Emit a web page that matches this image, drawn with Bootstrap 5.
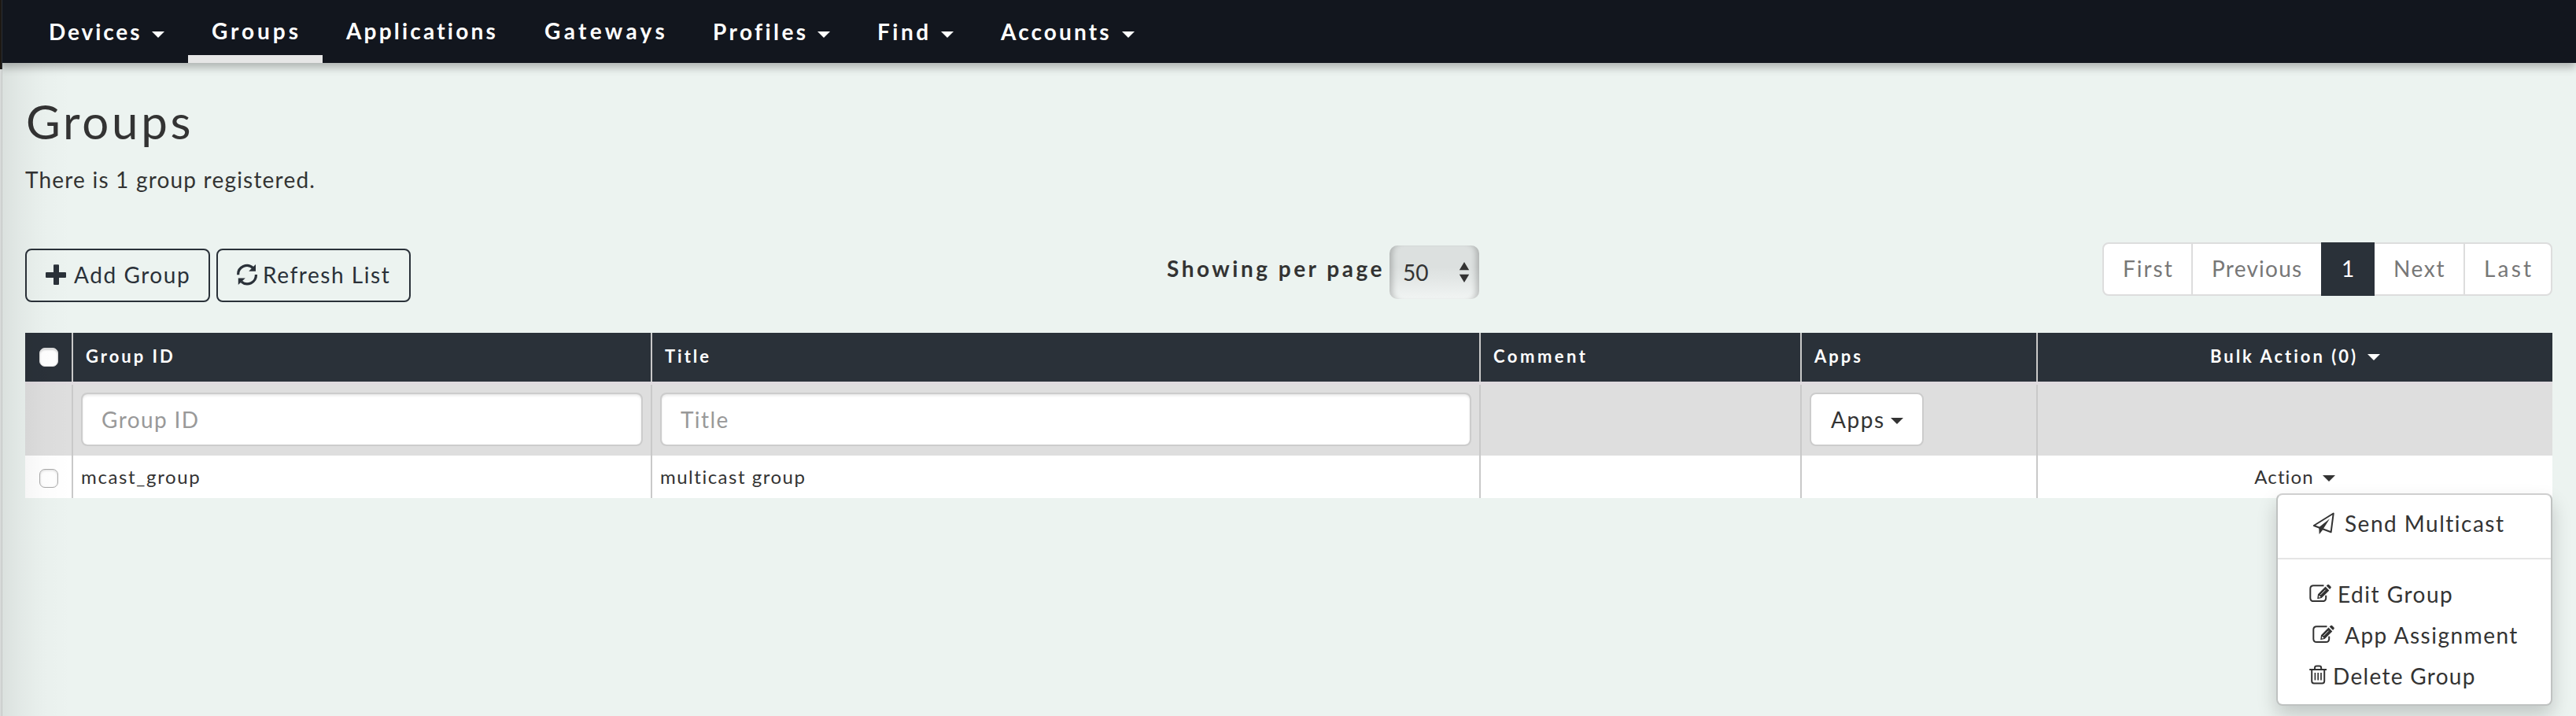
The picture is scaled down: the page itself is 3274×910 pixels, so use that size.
<!DOCTYPE html>
<html lang="en">
<head>
<meta charset="utf-8">
<meta name="viewport" content="width=device-width, initial-scale=1">
<title>Groups</title>
<link href="https://cdn.jsdelivr.net/npm/bootstrap@5.3.0/dist/css/bootstrap.min.css" rel="stylesheet">
<style>
  :root { --ink: #333; --dark: #2a3139; --line: #c9c9c9; }
  html, body { height: 910px; overflow: hidden; }
  body { font-family: Lato, sans-serif; font-size: 28px; line-height: 40px; color: var(--ink); background: #ecf3f0; letter-spacing: 1.5px; white-space: nowrap; }

  /* window edge and its soft shadow */
  .edge { position: absolute; left: 0; top: 0; bottom: 0; width: 3px; z-index: 20; background: linear-gradient(90deg, #d6d9d8 2px, #c3c6c5 2px); }
  .edge::before { content: ""; display: block; height: 88px; width: 3px; background: linear-gradient(90deg, #1d1813 2px, #2b3036 2px); }
  .edge-shade { position: absolute; left: 3px; top: 80px; bottom: 0; width: 88px; z-index: 5; pointer-events: none; background: linear-gradient(90deg, rgba(0,0,0,.075), rgba(0,0,0,.045) 25%, rgba(0,0,0,.012) 60%, transparent); }

  .topbar { height: 80px; padding: 0 0 0 32px; background: #12161e; box-shadow: 0 6px 10px rgba(0,0,0,.26); position: relative; z-index: 6; }
  .topbar .nav-link { height: 80px; padding: 0 30px; line-height: 78px; font-weight: 700; color: #fff; border-radius: 0; }
  .topbar .active { box-shadow: inset 0 -10px #e6e6e6; }
  .n1 { width: 207px; letter-spacing: 2.9px; } .n2 { width: 171px; letter-spacing: 3.95px; }
  .n3 { width: 252px; letter-spacing: 3.2px; } .n4 { width: 214px; letter-spacing: 4.35px; }
  .n5 { width: 209px; letter-spacing: 3.4px; } .n6 { width: 157px; letter-spacing: 3.5px; }
  .n7 { width: 230px; letter-spacing: 3.1px; }

  .tri { display: inline-block; width: 0; height: 0; border: 8px solid transparent; border-top-color: currentColor; border-bottom: 0; flex: none; }
  main { padding: 0 30px 0 32px; }
  h1.title { font-size: 60px; font-weight: 400; line-height: 72px; letter-spacing: 3.7px; margin: 38px 0 0 1px; }
  .summary { margin: 18px 0 0; line-height: 40px; letter-spacing: 1.2px; }

  .tools { margin-top: 60px; height: 76px; display: grid; grid-template-columns: 1451px auto 1fr; align-items: start; }
  .btn-tool { height: 68px; margin-top: 8px; border: 2px solid var(--dark); border-radius: 8px; color: var(--dark); font-size: 28px; line-height: 63px; letter-spacing: 1.55px; padding: 0 0 0 24px; display: flex; text-align: left; }
  .btn-tool svg { flex: none; }
  .per-page { font-weight: 700; letter-spacing: 3.5px; line-height: 67px; }
  .page-size { width: 114px; height: 68px; margin: 4px 0 0 6px; padding: 0 12px 0 17px; border-radius: 10px; line-height: 65px; letter-spacing: 0; background: linear-gradient(#dce0df 0, #dce0df 40%, #e2e6e5 60%, #f1f4f3); box-shadow: inset 9px 0 7px -5px rgba(0,0,0,.2), inset -9px 0 7px -5px rgba(0,0,0,.2); }

  .pages { --bs-pagination-color: #777; --bs-pagination-border-color: #ddd; margin: 0; }
  .pages .page-link { height: 68px; padding: 0 0 0 24px; font-size: 28px; line-height: 63px; color: #777; border: 2px solid #ddd; letter-spacing: 1.4px; }
  .pages .page-item + .page-item .page-link { margin-left: -2px; }
  .pages .page-item:first-child .page-link { border-radius: 8px 0 0 8px; }
  .pages .page-item:last-child .page-link { border-radius: 0 8px 8px 0; }
  .pages .active .page-link { background: var(--dark); border-color: var(--dark); color: #fff; position: relative; z-index: 3; }

  .groups { table-layout: fixed; width: 3212px; margin-top: 39px; border-collapse: separate; border-spacing: 0; font-size: 24px; }
  .groups th, .groups td { padding: 0; border-right: 2px solid var(--line); vertical-align: top; }
  .groups tr > :last-child { border-right: 0; }
  .groups th { height: 62px; background: var(--dark); color: #fff; font-size: 22px; font-weight: 700; line-height: 60px; letter-spacing: 3px; padding-left: 16px; }
  .groups th.plain, .groups th:last-child { padding-left: 0; }
  .groups .strip td { height: 4px; background: #dfdbdf; border: 0; }
  .groups .filters td { height: 90px; background: #dedede; padding: 10px 10px 0 10px; }
  .groups .entry td { height: 54px; background: #fff; line-height: 54px; padding-left: 10px; letter-spacing: 1.65px; }
  .groups td.plain, .groups td.act { padding-left: 0 !important; }
  .tick { display: block; width: 24px; height: 24px; margin: 19px auto 0 18px; border-radius: 7px; background: #fff; border: 1px solid #dcdcdc; box-shadow: inset 0 2px 2px rgba(0,0,0,.15); }
  .entry .tick { margin-top: 17px; border: 1.5px solid #aaa; box-shadow: inset 0 1px 3px rgba(0,0,0,.15); }
  .filters .form-control { height: 68px; padding: 0 24px; border: 2px solid #ccc; border-radius: 8px; font-size: 28px; letter-spacing: 1.4px; line-height: 60px; box-shadow: inset 0 2px 3px rgba(0,0,0,.09); }
  .filters .form-control::placeholder { color: #999; opacity: 1; }
  .btn-apps { width: 145px; height: 68px; border: 2px solid #ccc; border-radius: 8px; background: #fff; color: var(--ink); font-size: 28px; line-height: 62px; letter-spacing: 1.6px; padding: 0 24px 0 25px; }

  .actions { position: absolute; left: 2893px; top: 627px; width: 351px; height: 270px; background: #fff; border: 2px solid #bfc2c1; border-top-color: #cfcfcf; border-radius: 8px; box-shadow: 0 12px 24px rgba(0,0,0,.18); z-index: 10; padding-top: 11px; }
  .actions a { display: flex; height: 52px; line-height: 50px; color: var(--ink); text-decoration: none; padding-left: 40px; }
  .actions .in { padding-left: 44px; }
  .actions svg { flex: none; width: 28px; height: 28px; margin-top: 11px; }
  .actions .rule { height: 2px; background: #e5e5e5; margin: 17px 0 19px; }
</style>
</head>
<body>
<svg class="d-none">
  <symbol id="edit" viewBox="0 0 28 28"><path d="M18.5 3.2H5.4Q1.3 3.2 1.3 7.3V19Q1.3 23.1 5.4 23.1H17Q21.2 23.1 21.2 19V15.8" fill="none" stroke="currentColor" stroke-width="2"/><path fill="currentColor" fill-rule="evenodd" d="M20.5 4.6 25.3 9.4 15.7 19 10.2 20.2 11 14.2ZM12.4 15.8 11.9 18.5 14.7 18Z"/><path d="M14 15.2 20.5 8.7" stroke="#fff" stroke-width=".9"/><path d="M21.6 3.5 23.4 2Q24.3 1.4 25.2 2.2L27.4 4.4Q28.2 5.3 27.5 6.3L26.1 8.1Z" fill="currentColor"/></symbol>
  <symbol id="trash" viewBox="0 0 28 28"><g fill="none" stroke="currentColor" stroke-width="2"><path d="M.2 6H22M7 5.8V4Q7 1.6 9.4 1.6H12.8Q15.2 1.6 15.2 4V5.8M3.2 6V20.4Q3.2 23.4 6 23.4H16.4Q19.2 23.4 19.2 20.4V6"/><path d="M7.4 10V19.5M11.2 10V19.5M15 10V19.5" stroke-width="1.7"/></g></symbol>
  <symbol id="plane" viewBox="0 0 28 28"><path d="M1.8 17 26.7 1.5 23.6 25.3Z" fill="none" stroke="currentColor" stroke-width="2" stroke-linejoin="round"/><path d="M22 8.2 12.6 23 8.7 28 8.2 19.3Z" fill="currentColor"/></symbol>
</svg>
<div class="edge"></div><div class="edge-shade"></div>

<nav class="topbar nav flex-nowrap">
  <a class="nav-link n1 d-flex justify-content-between align-items-center" href="#">Devices<span class="tri mt-2"></span></a>
  <a class="nav-link n2 active" href="#">Groups</a>
  <a class="nav-link n3" href="#">Applications</a>
  <a class="nav-link n4" href="#">Gateways</a>
  <a class="nav-link n5 d-flex justify-content-between align-items-center" href="#">Profiles<span class="tri mt-2"></span></a>
  <a class="nav-link n6 d-flex justify-content-between align-items-center" href="#">Find<span class="tri mt-2"></span></a>
  <a class="nav-link n7 d-flex justify-content-between align-items-center" href="#">Accounts<span class="tri mt-2"></span></a>
</nav>

<main>
  <h1 class="title">Groups</h1>
  <p class="summary">There is 1 group registered.</p>

  <div class="tools">
    <div class="d-flex gap-2">
      <button class="btn btn-tool" style="width:235px"><svg width="36" height="30" viewBox="0 0 36 30" style="margin-top:16px"><path fill="currentColor" d="M11 2.2h5q1 0 1 1V12h8q1 0 1 1v5q0 1-1 1h-8v8q0 1-1 1h-5q-1 0-1-1v-8H1q-1 0-1-1v-5q0-1 1-1h9V3.200q0-1 1-1Z"/></svg>Add Group</button>
      <button class="btn btn-tool" style="width:247px"><svg width="33" height="30" viewBox="0 0 33 30" style="margin-top:16px"><g fill="none" stroke="currentColor" stroke-width="3.200"><path d="M1.700 15.200A11.200 11.200 0 0 1 20.500 6.500M24.400 15A11.200 11.200 0 0 1 5.800 24"/></g><path fill="currentColor" d="M24 2V10.700H15.200ZM1.800 28V19.500H10.800Z"/></svg>Refresh List</button>
    </div>
    <div class="d-flex">
      <span class="per-page">Showing per page</span>
      <span class="page-size d-flex justify-content-between align-items-center">50<svg width="14" height="28" viewBox="0 0 14 28"><path fill="#333" d="M7 1 13.200 11.300H.8ZM7 27 13.200 16.700H.8Z"/></svg></span>
    </div>
    <ul class="pagination pages justify-content-end">
      <li class="page-item"><a class="page-link" style="width:115px;letter-spacing:2px" href="#">First</a></li>
      <li class="page-item"><a class="page-link" style="width:167px;letter-spacing:1.25px" href="#">Previous</a></li>
      <li class="page-item active"><a class="page-link" style="width:68px" href="#">1</a></li>
      <li class="page-item"><a class="page-link" style="width:117px;letter-spacing:1.65px" href="#">Next</a></li>
      <li class="page-item"><a class="page-link" style="width:113px;letter-spacing:3.2px" href="#">Last</a></li>
    </ul>
  </div>

  <table class="groups">
    <colgroup><col style="width:61px"><col style="width:736px"><col style="width:1053px"><col style="width:408px"><col style="width:300px"><col style="width:654px"></colgroup>
    <thead>
      <tr><th class="plain"><span class="tick"></span></th><th>Group ID</th><th>Title</th><th style="letter-spacing:3.5px">Comment</th><th>Apps</th>
        <th><div class="d-flex justify-content-center align-items-center pe-1">Bulk Action (0)<span class="tri ms-2" style="margin-top:2px;transform:translateX(4px)"></span></div></th></tr>
    </thead>
    <tbody>
      <tr class="strip"><td colspan="6"></td></tr>
      <tr class="filters"><td></td><td><input class="form-control" placeholder="Group ID"></td><td><input class="form-control" placeholder="Title"></td><td></td>
        <td><button class="btn btn-apps d-flex justify-content-between align-items-center">Apps<span class="tri mt-1"></span></button></td><td></td></tr>
      <tr class="entry"><td class="plain"><span class="tick"></span></td><td>mcast_group</td><td style="letter-spacing:1.5px">multicast group</td><td></td><td></td>
        <td class="act"><div class="d-flex justify-content-center align-items-center pe-1" style="line-height:53px;letter-spacing:1.1px">Action<span class="tri ms-2 mt-1" style="transform:translateX(3px)"></span></div></td></tr>
    </tbody>
  </table>
</main>

<div class="actions">
  <a class="in" href="#"><svg style="margin-right:13px"><use href="#plane"/></svg>Send Multicast</a>
  <div class="rule"></div>
  <a href="#"><svg style="margin-right:8px"><use href="#edit"/></svg>Edit Group</a>
  <a class="in" href="#"><svg style="margin-right:13px"><use href="#edit"/></svg>App Assignment</a>
  <a href="#" style="letter-spacing:1.3px"><svg style="margin-right:2px"><use href="#trash"/></svg>Delete Group</a>
</div>
<script src="https://cdn.jsdelivr.net/npm/bootstrap@5.3.0/dist/js/bootstrap.bundle.min.js"></script>
</body>
</html>
